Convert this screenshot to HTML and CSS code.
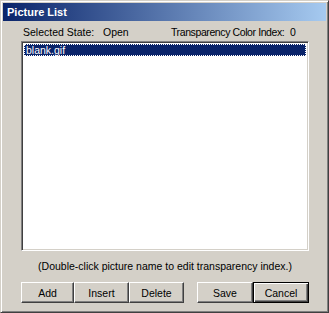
FILE: index.html
```html
<!DOCTYPE html>
<html lang="en">
<head>
    <meta charset="UTF-8">
    <title>Picture List</title>
    <link rel="stylesheet" href="styles.css">
</head>
<body>
    <div class="window">
        <div class="titlebar">Picture List</div>
        <div class="content">
            <div class="info">
                <span class="state">Selected State:&nbsp;&nbsp; Open</span>
                <span class="index">Transparency Color Index:</span>
                <span class="value">0</span>
            </div>
            <div class="listbox">
                <div class="item selected">blank.gif</div>
            </div>
            <p class="hint">(Double-click picture name to edit transparency index.)</p>
            <div class="buttons">
                <div class="group">
                    <button class="btn add">Add</button>
                    <button class="btn insert">Insert</button>
                    <button class="btn delete">Delete</button>
                </div>
                <div class="group">
                    <button class="btn save">Save</button>
                    <button class="btn cancel">Cancel</button>
                </div>
            </div>
        </div>
    </div>
</body>
</html>
```

FILE: styles.css
```css
body {
    margin: 0;
    background: #d4d0c8;
    font-family: 'Liberation Sans', Arial, sans-serif;
    font-size: 10.5px;
}
.window {
    width: 329px;
    height: 313px;
    box-sizing: border-box;
    background: #d4d0c8;
    border: 1px solid;
    border-color: #d4d0c8 #404040 #404040 #d4d0c8;
    box-shadow: inset 1px 1px 0 #fff, inset -1px -1px 0 #808080;
    padding: 2px;
    display: flex;
    flex-direction: column;
}
.titlebar {
    height: 18px;
    line-height: 18px;
    padding-left: 4px;
    background: linear-gradient(to right, #0a246a, #a6caf0);
    color: white;
    font-weight: bold;
    font-size: 11px;
}
.content {
    padding: 0 17px 0 18px;
    display: flex;
    flex-direction: column;
}
.info {
    display: flex;
    height: 20px;
    line-height: 15px;
    padding: 4px 0 0 2px;
    box-sizing: border-box;
    white-space: nowrap;
}
.state {
    width: 148px;
}
.index {
    letter-spacing: -0.4px;
    width: 119px;
}
.listbox {
    height: 210px;
    background: white;
    border: 1px solid;
    border-color: #808080 #fff #fff #808080;
    box-shadow: inset 1px 1px 0 #404040, inset -1px -1px 0 #d4d0c8;
    padding: 2px;
    box-sizing: border-box;
}
.item {
    height: 12px;
    line-height: 12px;
    padding-left: 2px;
}
.selected {
    background: #0a246a;
    color: white;
    outline: 1px dotted #fff;
    outline-offset: -1px;
}
.hint {
    margin: 0;
    height: 31px;
    line-height: 31px;
    text-align: center;
}
.buttons {
    display: flex;
    justify-content: space-between;
}
.group {
    display: flex;
}
.btn {
    height: 21px;
    padding: 0;
    font-family: inherit;
    font-size: 10.5px;
    background: #d4d0c8;
    border: 1px solid;
    border-color: #fff #404040 #404040 #fff;
    box-shadow: inset -1px -1px 0 #808080;
}
.add { width: 53px; }
.insert { width: 55px; }
.delete { width: 55px; }
.save { width: 56px; }
.cancel {
    width: 56px;
    border-color: #000;
    box-shadow: inset 1px 1px 0 #fff, inset -1px -1px 0 #404040, inset -2px -2px 0 #808080;
}
```
